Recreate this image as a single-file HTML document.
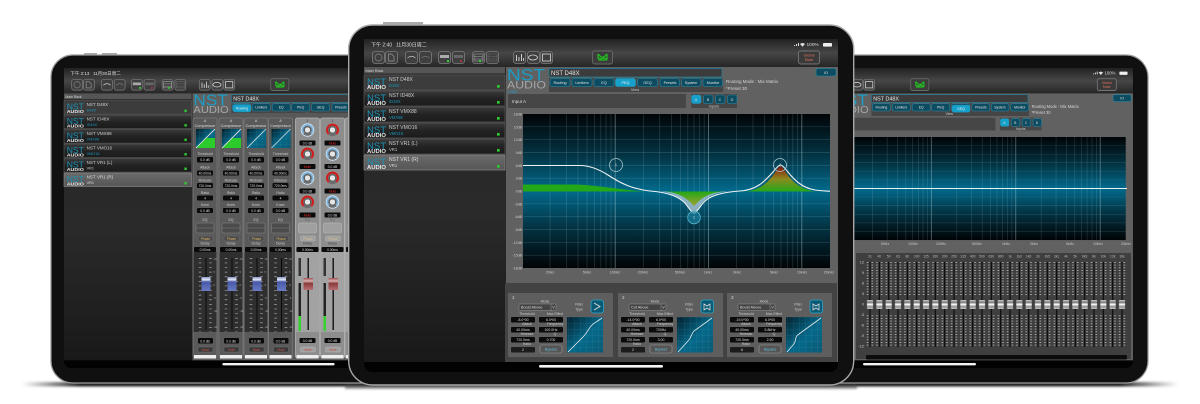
<!DOCTYPE html>
<html><head><meta charset="utf-8"><style>
html,body{margin:0;padding:0;background:#fff;width:1200px;height:404px;overflow:hidden}
svg{display:block}
text{font-family:"Liberation Sans","Noto Sans CJK SC",sans-serif}
</style></head><body>
<svg xmlns="http://www.w3.org/2000/svg" width="1200" height="404" viewBox="0 0 1200 404">
<defs>
<linearGradient id="tb" x1="0" y1="0" x2="0" y2="1"><stop offset="0" stop-color="#222"/><stop offset=".5" stop-color="#464646"/><stop offset="1" stop-color="#262626"/></linearGradient>
<linearGradient id="li" x1="0" y1="0" x2="0" y2="1"><stop offset="0" stop-color="#3a3a3a"/><stop offset=".5" stop-color="#232323"/><stop offset="1" stop-color="#1b1b1b"/></linearGradient>
<linearGradient id="lsel" x1="0" y1="0" x2="0" y2="1"><stop offset="0" stop-color="#6a6a6a"/><stop offset="1" stop-color="#565656"/></linearGradient>
<linearGradient id="lb" x1="0" y1="0" x2="0" y2="1"><stop offset="0" stop-color="#262626"/><stop offset=".5" stop-color="#2a2a2a"/><stop offset="1" stop-color="#191919"/></linearGradient>
<linearGradient id="plot" x1="0" y1="0" x2="0" y2="1"><stop offset="0" stop-color="#010406"/><stop offset=".25" stop-color="#03303f"/><stop offset=".5" stop-color="#026a8c"/><stop offset=".75" stop-color="#03303f"/><stop offset="1" stop-color="#010406"/></linearGradient>
<linearGradient id="mini" x1="0" y1="0" x2="1" y2="1"><stop offset="0" stop-color="#04202c"/><stop offset=".55" stop-color="#05698a"/><stop offset="1" stop-color="#0a5a74"/></linearGradient>
<linearGradient id="pk" x1="0" y1="0" x2="0" y2="1"><stop offset="0" stop-color="#8e1408"/><stop offset=".5" stop-color="#8c8a20"/><stop offset="1" stop-color="#22a818"/></linearGradient>
<linearGradient id="dp" x1="0" y1="1" x2="0" y2="0"><stop offset="0" stop-color="#a0a030"/><stop offset="1" stop-color="#22a818"/></linearGradient>
<linearGradient id="cap" x1="0" y1="0" x2="0" y2="1"><stop offset="0" stop-color="#8d9ad0"/><stop offset=".2" stop-color="#e4e6f2"/><stop offset=".35" stop-color="#4658a8"/><stop offset="1" stop-color="#6a7ac4"/></linearGradient>
<linearGradient id="capr" x1="0" y1="0" x2="0" y2="1"><stop offset="0" stop-color="#a05050"/><stop offset=".25" stop-color="#d8b0b0"/><stop offset=".45" stop-color="#8a3a3a"/><stop offset="1" stop-color="#b87070"/></linearGradient>
<linearGradient id="shd" x1="0" y1="0" x2="1" y2="0"><stop offset="0" stop-color="#444" stop-opacity="0"/><stop offset=".05" stop-color="#222"/><stop offset=".95" stop-color="#222"/><stop offset="1" stop-color="#444" stop-opacity="0"/></linearGradient>
<filter id="bl" x="-5%" y="-200%" width="110%" height="500%"><feGaussianBlur stdDeviation="1.1"/></filter>
<pattern id="cgrid" width="6" height="6" patternUnits="userSpaceOnUse"><path d="M0 0H6M0 0V6" stroke="#8fc4d6" stroke-opacity=".35" stroke-width=".4" fill="none"/></pattern>
<pattern id="gdots" x="865.330" y="262" width="9.333" height="2.667" patternUnits="userSpaceOnUse"><rect x="1.500" y="0" width="1.600" height=".9" fill="#cfcfcf" fill-opacity=".8"/><rect x="6.200" y="0" width="1.600" height=".9" fill="#cfcfcf" fill-opacity=".8"/></pattern>
<pattern id="gcap" x="865.330" y="300" width="9.333" height="9" patternUnits="userSpaceOnUse"><rect x="1.700" y="0" width="6" height="9" fill="#b9b9b9"/><rect x="1.700" y="1.500" width="6" height="1.300" fill="#777"/><rect x="1.700" y="3.800" width="6" height="1.400" fill="#f4f4f4"/><rect x="1.700" y="6.400" width="6" height="1.100" fill="#888"/></pattern>

<g id="btn"><rect x=".5" y=".5" width="12" height="12" rx="2.500" fill="#3f3f3f" stroke="#7d7d7d" stroke-width=".8"/></g>

<g id="item">
<text x="3" y="10" font-size="9.500" fill="#1b93b8" textLength="19" lengthAdjust="spacingAndGlyphs">NST</text>
<text x="3" y="14" font-size="5.500" font-weight="bold" fill="#e8e8e8" textLength="19" lengthAdjust="spacingAndGlyphs">AUDIO</text>
</g>

<g id="ticks"><path d="M-5.500 0V74M5 0V74" stroke="#a8a8a8" stroke-width="2.600" stroke-dasharray=".7 3.900" fill="none"/><g font-size="2.600" fill="#aaa"><text x="8" y="2">10</text><text x="8" y="15">5</text><text x="8" y="28">0</text><text x="8" y="41">-5</text><text x="8" y="54">-10</text><text x="8" y="70">-20</text></g></g>

<g id="shell">
<rect x="364" y="39" width="474" height="28" fill="url(#tb)"/>
<use href="#btn" x="372" y="51"/><use href="#btn" x="385" y="51"/>
<circle cx="378.500" cy="57.500" r="3.500" fill="none" stroke="#777" stroke-width=".9"/>
<path d="M388.500 54h3l2.500 2.500v4.500h-5.500z" fill="none" stroke="#999" stroke-width=".7"/>
<use href="#btn" x="405" y="51"/><use href="#btn" x="419" y="51"/>
<path d="M407.500 58q4-3.500 8 0" stroke="#ccc" stroke-width=".8" fill="none"/><path d="M421.500 58q4-3.500 8 0" stroke="#777" stroke-width=".8" fill="none"/>
<use href="#btn" x="438" y="51"/><use href="#btn" x="452" y="51"/>
<rect x="440" y="55" width="9" height="3" fill="#aaa"/><rect x="454" y="55" width="9" height="3" fill="#666"/><rect x="447" y="60" width="2" height="2" fill="#2fd02f"/><rect x="460" y="60" width="2" height="2" fill="#a33"/>
<use href="#btn" x="472" y="51"/><use href="#btn" x="486" y="51"/>
<path d="M474 54h9v7h-9zM474 56.500h9M474 59h9" stroke="#aaa" stroke-width=".6" fill="none"/><path d="M488 54h9v7h-9zM488 56.500h9M488 59h9" stroke="#666" stroke-width=".6" fill="none"/><rect x="479" y="60" width="2" height="2" fill="#2fd02f"/>
<use href="#btn" x="513" y="51"/><use href="#btn" x="527" y="51"/><use href="#btn" x="540" y="51"/>
<path d="M516 61V55h.9v6zM518.500 61v-4h.9v4zM521 61V54h.9v7zM523 61v-3h.8v3z" fill="#ddd"/>
<ellipse cx="533" cy="57.500" rx="4.500" ry="2.500" fill="none" stroke="#ddd" stroke-width=".8"/>
<rect x="542.500" y="54" width="8" height="7" fill="none" stroke="#ddd" stroke-width=".8"/>
<rect x="592.500" y="51" width="20" height="13" rx="2" fill="#3c3c3c" stroke="#777" stroke-width=".7"/>
<path d="M598 54v4l3 1 3-1 3 1v-5M598 54l3 3 3 0 3-3M598 60h9" stroke="#23b823" stroke-width="1.300" fill="none"/>
<rect x="798.500" y="51" width="21" height="13" rx="2" fill="#3a3a3a" stroke="#888" stroke-width=".7"/>
<text x="809" y="56.500" font-size="3.800" fill="#e0705a" text-anchor="middle">Global</text><text x="809" y="61" font-size="3.800" fill="#e0705a" text-anchor="middle">Mute</text>
<path d="M794 46v-1h1v1zM796 46v-2h1v2zM798 46v-3h1v3z" fill="#ddd"/>
<path d="M800 44q2.500-2 5 0l-2.500 2.700z" fill="#ddd"/>
<text x="806.500" y="46" font-size="4.800" fill="#ddd">100%</text>
<rect x="823" y="43" width="9" height="3.600" rx=".8" fill="#eee"/>
<!-- list -->
<rect x="364" y="67" width="142" height="295" fill="url(#lb)"/>
<rect x="364" y="67" width="141" height="6.500" fill="#555"/><text x="365.500" y="72" font-size="3.800" fill="#ddd">Main Rack</text>
<g><rect x="364" y="75" width="141" height="15" fill="#3c3c3c" stroke="#5a5a5a" stroke-width=".7"/><use href="#item" x="364" y="75"/><text x="389" y="81" font-size="5" fill="#ccc">NST D48X</text><text x="389" y="87" font-size="4.200" fill="#1b93b8">D48X</text><rect x="497" y="85" width="2.700" height="2.700" fill="#2fc62f"/></g>
<g><rect x="364" y="91" width="141" height="15" fill="url(#li)" stroke="#5a5a5a" stroke-width=".7"/><use href="#item" x="364" y="91"/><text x="389" y="97" font-size="5" fill="#ccc">NST ID48X</text><text x="389" y="103" font-size="4.200" fill="#1b93b8">ID48X</text><rect x="497" y="101" width="2.700" height="2.700" fill="#2fc62f"/></g>
<g><rect x="364" y="107" width="141" height="15" fill="url(#li)" stroke="#5a5a5a" stroke-width=".7"/><use href="#item" x="364" y="107"/><text x="389" y="113" font-size="5" fill="#ccc">NST VMX88</text><text x="389" y="119" font-size="4.200" fill="#1b93b8">VMX88</text><rect x="497" y="117" width="2.700" height="2.700" fill="#2fc62f"/></g>
<g><rect x="364" y="123" width="141" height="15" fill="url(#li)" stroke="#5a5a5a" stroke-width=".7"/><use href="#item" x="364" y="123"/><text x="389" y="129" font-size="5" fill="#ccc">NST VMO16</text><text x="389" y="135" font-size="4.200" fill="#1b93b8">VMO16</text><rect x="497" y="133" width="2.700" height="2.700" fill="#2fc62f"/></g>
<g><rect x="364" y="139" width="141" height="15" fill="url(#li)" stroke="#5a5a5a" stroke-width=".7"/><use href="#item" x="364" y="139"/><text x="389" y="145" font-size="5" fill="#ccc">NST VR1 (L)</text><text x="389" y="151" font-size="4.200" fill="#ccc">VR1</text><rect x="497" y="149" width="2.700" height="2.700" fill="#2fc62f"/></g>
<g><rect x="364" y="155" width="141" height="15" fill="url(#lsel)" stroke="#888" stroke-width=".7"/><use href="#item" x="364" y="155"/><text x="389" y="161" font-size="5" fill="#ddd">NST VR1 (R)</text><text x="389" y="167" font-size="4.200" fill="#ddd">VR1</text><rect x="497" y="165" width="2.700" height="2.700" fill="#2fc62f"/></g>
<!-- panel -->
<rect x="506" y="67" width="332" height="295" fill="#616161"/>
<text x="507" y="80.500" font-size="17" fill="#1a9cc4" textLength="38" lengthAdjust="spacingAndGlyphs">NST</text>
<text x="507" y="88.500" font-size="11" fill="#a5a5a5" textLength="39" lengthAdjust="spacingAndGlyphs">AUDIO</text>
<text x="508" y="93" font-size="3.800" fill="#1a9cc4">D48X</text>
<rect x="549" y="68.500" width="173" height="8.500" rx="1" fill="#3c3c3c" stroke="#1b7f9c" stroke-width=".7"/>
<text x="551" y="75" font-size="6" fill="#e6e6e6">NST D48X</text>
<rect x="549" y="78" width="174" height="14" fill="#454545"/>
<g font-size="3.800" fill="#e4e4e4" text-anchor="middle">
<g fill="#0d4b60" stroke="#2b8ba8" stroke-width=".6"><rect x="550" y="78.500" width="20" height="8" rx="2"/><rect x="572" y="78.500" width="20" height="8" rx="2"/><rect x="594" y="78.500" width="20" height="8" rx="2"/><rect x="615.500" y="78.500" width="20" height="8" rx="2"/><rect x="637.500" y="78.500" width="20" height="8" rx="2"/><rect x="660" y="78.500" width="19.500" height="8" rx="2"/><rect x="681.500" y="78.500" width="19.500" height="8" rx="2"/><rect x="703" y="78.500" width="19.500" height="8" rx="2"/></g>
<text x="560" y="84">Routing</text><text x="582" y="84">Limiters</text><text x="604" y="84">EQ</text><text x="625.500" y="84">PEQ</text><text x="647.500" y="84">GEQ</text><text x="670" y="84">Presets</text><text x="691" y="84">System</text><text x="713" y="84">Monitor</text>
<text x="635" y="91" fill="#ccc">View</text>
</g>
</g>

<g id="hdr">
<text x="726" y="83" font-size="4.500" fill="#d5d5d5">Routing Mode : Mix Matrix</text>
<text x="726" y="90" font-size="4.500" fill="#d5d5d5">*Preset 30</text>
<rect x="816" y="68.500" width="20" height="7.500" rx="2" fill="#0d4b60" stroke="#2b8ba8" stroke-width=".6"/><text x="826" y="74" font-size="4" fill="#ddd" text-anchor="middle">IO</text>
<rect x="508" y="94" width="178" height="14" rx="1" fill="#464646"/>
<text x="512" y="103" font-size="4.500" fill="#ddd">Input A</text>
<rect x="691" y="94" width="46" height="14" rx="1" fill="#464646"/>
<g font-size="3.800" text-anchor="middle" fill="#ddd">
<g fill="#0d4b60" stroke="#2b8ba8" stroke-width=".6"><rect x="691.500" y="95" width="9.500" height="8.500" rx="2" fill="#16a0cc"/><rect x="703.500" y="95" width="9.500" height="8.500" rx="2"/><rect x="715.500" y="95" width="9.500" height="8.500" rx="2"/><rect x="727.500" y="95" width="9.500" height="8.500" rx="2"/></g>
<text x="696" y="101">A</text><text x="708" y="101">B</text><text x="720" y="101">C</text><text x="732" y="101">D</text>
<text x="714" y="107.300" fill="#ccc">Inputs</text>
</g>
</g>

<g id="plotg">
<rect x="523" y="114" width="307" height="154" fill="url(#plot)"/>
<path d="M523 126.800H830M523 139.700H830M523 152.500H830M523 165.300H830M523 178.200H830M523 203.800H830M523 216.700H830M523 229.500H830M523 242.300H830M523 255.200H830" stroke="#9fd0e0" stroke-opacity=".22" stroke-width=".7"/>
<path d="M550 114V268M566.400 114V268M578 114V268M587 114V268M594.500 114V268M600.800 114V268M606 114V268M611 114V268M643.300 114V268M659.700 114V268M671.400 114V268M680.400 114V268M687.800 114V268M694 114V268M699.500 114V268M704.200 114V268M736.600 114V268M753 114V268M764.700 114V268M773.700 114V268M781 114V268M787.300 114V268M792.800 114V268M797.500 114V268" stroke="#b8dde8" stroke-opacity=".2" stroke-width=".7"/>
<path d="M615.200 114V268M708.500 114V268M801.800 114V268" stroke="#c8e4ec" stroke-opacity=".42" stroke-width=".9"/>
</g>

<g id="ch">
<rect x="0" y="118" width="24" height="240" rx="2" fill="#5a5a5a" stroke="#7a7a7a" stroke-width=".8"/>
<rect x=".5" y="252" width="23" height="80" fill="#2f2f2f"/>
<text x="12" y="122" font-size="3.500" fill="#ddd" text-anchor="middle">A</text>
<text x="12" y="127" font-size="3.800" fill="#ddd" text-anchor="middle">Compressor</text>
<rect x="3" y="129" width="19" height="19" fill="url(#mini)"/><rect x="3" y="129" width="19" height="19" fill="url(#cgrid)"/>
<path d="M3 148L22 129" stroke="#ddd" stroke-width=".8"/>
<g font-size="3.500" fill="#ccc" text-anchor="middle"><text x="12" y="155">Threshold</text><text x="12" y="168.500">Attack</text><text x="12" y="181.500">Release</text><text x="12" y="194">Ratio</text><text x="12" y="206">Knee</text><text x="12" y="221">EQ</text><text x="12" y="244.500">Delay</text></g>
<g fill="#0b0b0b"><rect x="4" y="157" width="16" height="5.500" rx="1"/><rect x="4" y="170.500" width="16" height="5" rx="1"/><rect x="4" y="183" width="16" height="5" rx="1"/><rect x="4" y="195.500" width="16" height="5" rx="1"/><rect x="4" y="208" width="16" height="5" rx="1"/><rect x="1" y="247" width="22" height="5" rx="1"/><rect x="5" y="338" width="15" height="5.500" rx="1"/></g>
<g font-size="3.300" fill="#ddd" text-anchor="middle"><text x="12" y="161.200">0.0 dB</text><text x="12" y="174.500">40.00ms</text><text x="12" y="187">720.0ms</text><text x="12" y="199.500">4</text><text x="12" y="212">0.0 dB</text><text x="12" y="251">0.00ms</text><text x="12" y="342.300">0.0 dB</text></g>
<rect x="3" y="223" width="18" height="10" rx="1.500" fill="#4b4b4b" stroke="#888" stroke-width=".5"/><path d="M3 228H21" stroke="#888" stroke-width=".4"/>
<rect x="5" y="236" width="15" height="5" rx="1" fill="#4b4b4b" stroke="#777" stroke-width=".4"/><text x="12.500" y="240" font-size="3.300" fill="#d9b060" text-anchor="middle">Phase</text>
<rect x="12.500" y="258" width="1" height="72" fill="#080808"/>
<use href="#ticks" x="12.500" y="258"/>
<rect x="8.500" y="277" width="9" height="14" rx=".5" fill="url(#cap)"/>
<rect x="5" y="347" width="15" height="5" rx="1" fill="#3a3a3a" stroke="#777" stroke-width=".4"/><text x="12.500" y="351" font-size="3.300" fill="#c05040" text-anchor="middle">Mute</text>
<rect x="1" y="355" width="22" height="3.500" fill="#eee"/>
</g>

<g id="kb"><circle r="6.300" fill="#6c6c6c" stroke="#cfe4f4" stroke-width="1"/><path d="M-3.500 3.500A5 5 0 1 1 3.500 3.500" fill="none" stroke="#79b8e8" stroke-width="1.400"/><circle r="3" fill="#e6e6e6" stroke="#333" stroke-width=".5"/></g>
<g id="kr"><circle r="6.300" fill="#6c6c6c" stroke="#888" stroke-width=".6"/><path d="M-3.900 3.900A5.500 5.500 0 1 1 3.900 3.900" fill="none" stroke="#d81818" stroke-width="1.900"/><circle r="3" fill="#e6e6e6" stroke="#333" stroke-width=".5"/></g>
<g id="vb"><rect x="4" y="0" width="16" height="5" rx="1" fill="#0b0b0b"/><text x="12" y="3.800" font-size="3.300" fill="#ddd" text-anchor="middle">0.0 dB</text></g>
<g id="mb"><rect x="4" y="0" width="16" height="5" rx="1" fill="#0b0b0b"/><text x="12" y="3.800" font-size="3.300" fill="#e02020" text-anchor="middle">Mute</text></g>

<g id="och">
<rect x="0" y="118" width="24" height="240" rx="2" fill="#8d8d8d" stroke="#b4b4b4" stroke-width=".8"/>
<rect x=".5" y="252" width="23" height="80" fill="#a2a2a2"/>
<text x="12" y="122" font-size="3.500" fill="#333" text-anchor="middle">1</text>
<text x="12" y="221" font-size="3.500" fill="#666" text-anchor="middle">EQ</text>
<rect x="3" y="223" width="18" height="10" rx="1.500" fill="#a0a0a0" stroke="#bbb" stroke-width=".5"/>
<rect x="5" y="236" width="15" height="5" rx="1" fill="#a0a0a0" stroke="#bbb" stroke-width=".4"/><text x="12.500" y="240" font-size="3.300" fill="#d8c090" text-anchor="middle">Phase</text>
<text x="12" y="244.500" font-size="3.500" fill="#444" text-anchor="middle">Delay</text>
<rect x="1" y="247" width="22" height="5" rx="1" fill="#0b0b0b"/><text x="12" y="251" font-size="3.300" fill="#ddd" text-anchor="middle">0.00ms</text>
<rect x="3" y="258" width="2.500" height="18" fill="#333"/><rect x="3" y="283" width="2.500" height="48" fill="#222"/><rect x="3" y="316" width="2.500" height="15" fill="#35d12f"/>
<rect x="12" y="258" width="1.400" height="72" fill="#111"/>
<use href="#ticks" x="12.500" y="258" opacity=".7"/>
<rect x="8" y="278" width="9.500" height="12" rx=".5" fill="url(#capr)"/>
<use href="#vb" x="0" y="338"/>
<rect x="5" y="347" width="15" height="5" rx="1" fill="#a0a0a0" stroke="#bbb" stroke-width=".4"/><text x="12.500" y="351" font-size="3.300" fill="#c05040" text-anchor="middle">Mute</text>
<rect x="1" y="355" width="22" height="3.500" fill="#eee"/>
</g>

<g id="card">
<rect x="0" y="0" width="105" height="64" fill="#5e5e5e"/>
<g font-size="3.500" fill="#ccc" text-anchor="middle">
<text x="37" y="9.500">Mode</text><text x="19" y="21.800">Threshold</text><text x="47" y="21.800">Max Effect</text><text x="19" y="31.800">Attack</text><text x="47" y="31.800">Frequency</text><text x="19" y="41.800">Release</text><text x="47" y="41.800">Q</text><text x="19" y="51.800">Ratio</text>
<text x="71" y="12.500">Filter</text><text x="71" y="17.500">Type</text>
</g>
<rect x="11" y="11" width="37" height="6.500" rx=".8" fill="#444" stroke="#aaa" stroke-width=".4"/><path d="M43 11V17.500" stroke="#aaa" stroke-width=".4"/>
<g fill="#0b0b0b"><rect x="3" y="24" width="24" height="5.500" rx="1"/><rect x="31" y="24" width="24" height="5.500" rx="1"/><rect x="3" y="34" width="24" height="5.500" rx="1"/><rect x="31" y="34" width="24" height="5.500" rx="1"/><rect x="3" y="44" width="24" height="5.500" rx="1"/><rect x="31" y="44" width="24" height="5.500" rx="1"/><rect x="3" y="54" width="24" height="5.500" rx="1" fill="#1c1c1c"/></g>
<rect x="32" y="52" width="22" height="8" rx="2" fill="#555" stroke="#999" stroke-width=".6"/><text x="43" y="57.300" font-size="3.800" fill="#5fc3e0" text-anchor="middle">Bypass</text>
<rect x="83" y="7" width="12.500" height="13" rx="2.500" fill="#0b5a75" stroke="#2ea5c6" stroke-width=".8"/>
<rect x="59" y="24" width="36" height="35.500" fill="url(#mini)"/><rect x="59" y="24" width="36" height="35.500" fill="url(#cgrid)"/>
</g>
</defs>

<rect width="1200" height="404" fill="#fff"/>
<!-- shadow -->
<rect x="22" y="382" width="1156" height="4.500" fill="url(#shd)" filter="url(#bl)"/>
<rect x="345" y="384" width="512" height="5" fill="#444" opacity=".55" filter="url(#bl)"/>

<!-- LEFT iPad -->
<rect x="84" y="53" width="13" height="3" fill="#aaa"/><rect x="102" y="53" width="15" height="3" fill="#aaa"/>
<rect x="51" y="55" width="500" height="328" rx="22" fill="#101010" stroke="#9a9a9a" stroke-width="1.200"/>
<rect x="64" y="68" width="429" height="300" rx="7" fill="#020202"/>
<g transform="translate(64,68) scale(.905) translate(-364,-39)"><use href="#shell"/>
<text x="371" y="46.500" font-size="5" fill="#ddd">下午 2:13</text><text x="396" y="46.500" font-size="5" fill="#ddd">11月30日周二</text></g>
<rect x="233" y="104.500" width="18" height="7.500" rx="2" fill="#16a0cc" stroke="#2b8ba8" stroke-width=".5"/><text x="242" y="109.700" font-size="3.500" fill="#eee" text-anchor="middle">Routing</text>
<rect x="192.500" y="113" width="156" height="246" fill="#585858"/>
<use href="#ch" x="193"/><use href="#ch" x="219"/><use href="#ch" x="244"/><use href="#ch" x="268.500"/>
<!-- active compressor areas -->
<path d="M196 148v-6l2 0 7-7v6h10v7z" fill="#2fd02f" opacity="0"/>
<path d="M196 148L206 138H215V148Z" fill="#2ccb2c"/><path d="M196 148L215 129" stroke="#ddd" stroke-width=".8"/>
<path d="M222 148L232 138H241V148Z" fill="#2ccb2c"/><path d="M222 148L241 129" stroke="#ddd" stroke-width=".8"/>
<use href="#och" x="295.500"/><use href="#och" x="320.500"/><use href="#och" x="345"/>
<use href="#kb" x="307.500" y="130"/>
<use href="#kr" x="307.500" y="154"/><use href="#kb" x="307.500" y="178"/><use href="#kr" x="307.500" y="202"/>
<use href="#kr" x="332.500" y="130"/><use href="#kb" x="332.500" y="154"/><use href="#kr" x="332.500" y="178"/><use href="#kb" x="332.500" y="202"/>
<g transform="translate(295.500,140.500)"><use href="#vb"/></g><g transform="translate(295.500,164)"><use href="#mb"/></g><g transform="translate(295.500,188.500)"><use href="#vb"/></g><g transform="translate(295.500,212.500)"><use href="#mb"/></g>
<g transform="translate(320.500,140.500)"><use href="#mb"/></g><g transform="translate(320.500,164)"><use href="#vb"/></g><g transform="translate(320.500,188.500)"><use href="#mb"/></g><g transform="translate(320.500,212.500)"><use href="#vb"/></g>
<g transform="translate(64,68) scale(.905) translate(-364,-39)"><rect x="539" y="365" width="124" height="2.600" rx="1.300" fill="#f4f4f4"/></g>

<!-- RIGHT iPad -->
<rect x="650" y="55" width="498" height="328" rx="22" fill="#101010" stroke="#9a9a9a" stroke-width="1.200"/>
<rect x="704" y="68" width="429" height="300" rx="7" fill="#020202"/>
<g transform="translate(704,68) scale(.905) translate(-364,-39)"><use href="#shell"/><use href="#hdr"/></g>
<rect x="952" y="105" width="18" height="7.300" rx="2" fill="#16a0cc" stroke="#2b8ba8" stroke-width=".5"/><text x="961" y="110" font-size="3.500" fill="#eee" text-anchor="middle">GEQ</text>
<g transform="translate(704,137) scale(.905,.669) translate(-364,-114)"><use href="#plotg"/></g>
<path d="M847 188.500H1127" stroke="#e8f2f5" stroke-width="1"/>
<g font-size="3.500" fill="#ccc" text-anchor="middle"><text x="885" y="245">50Hz</text><text x="913" y="245">100Hz</text><text x="941" y="245">200Hz</text><text x="977" y="245">500Hz</text><text x="1006" y="245">1kHz</text><text x="1034" y="245">2kHz</text><text x="1070" y="245">5kHz</text><text x="1098" y="245">10kHz</text><text x="1126" y="245">20kHz</text></g>
<rect x="856" y="253" width="275" height="106" rx="1" fill="#3f3f3f"/>
<rect x="865.330" y="262" width="261.300" height="34" fill="url(#gdots)"/>
<rect x="865.330" y="314" width="261.300" height="33" fill="url(#gdots)"/>
<path d="M870 262V347M879.330 262V347M888.660 262V347M898 262V347M907.330 262V347M916.660 262V347M926 262V347M935.330 262V347M944.660 262V347M954 262V347M963.330 262V347M972.660 262V347M982 262V347M991.330 262V347M1000.660 262V347M1010 262V347M1019.330 262V347M1028.660 262V347M1038 262V347M1047.330 262V347M1056.660 262V347M1066 262V347M1075.330 262V347M1084.660 262V347M1094 262V347M1103.330 262V347M1112.660 262V347M1122 262V347" stroke="#0a0a0a" stroke-width="1.100"/>
<rect x="865.330" y="300" width="261.300" height="9" fill="url(#gcap)"/>
<rect x="866" y="355" width="261" height="4.500" rx="1" fill="#0c0c0c"/>
<g font-size="3.300" fill="#bbb" text-anchor="middle"><text x="870" y="257.500">31</text><text x="879.300" y="257.500">40</text><text x="888.700" y="257.500">50</text><text x="898" y="257.500">63</text><text x="907.300" y="257.500">80</text><text x="916.700" y="257.500">100</text><text x="926" y="257.500">125</text><text x="935.300" y="257.500">160</text><text x="944.700" y="257.500">200</text><text x="954" y="257.500">250</text><text x="963.300" y="257.500">315</text><text x="972.700" y="257.500">400</text><text x="982" y="257.500">500</text><text x="991.300" y="257.500">630</text><text x="1000.700" y="257.500">800</text><text x="1010" y="257.500">1k</text><text x="1019.300" y="257.500">1k2</text><text x="1028.700" y="257.500">1k6</text><text x="1038" y="257.500">2k</text><text x="1047.300" y="257.500">2k5</text><text x="1056.700" y="257.500">3k1</text><text x="1066" y="257.500">4k</text><text x="1075.300" y="257.500">5k</text><text x="1084.700" y="257.500">6k3</text><text x="1094" y="257.500">8k</text><text x="1103.300" y="257.500">10k</text><text x="1112.700" y="257.500">12k</text><text x="1122" y="257.500">16k</text></g>
<g font-size="3.800" fill="#ccc" text-anchor="end"><text x="864" y="263.500">12</text><text x="864" y="274">9</text><text x="864" y="284.500">6</text><text x="864" y="295">3</text><text x="864" y="305.500">0</text><text x="864" y="316">-3</text><text x="864" y="326.500">-6</text><text x="864" y="337">-9</text><text x="864" y="347.500">-12</text></g>
<rect x="863" y="363" width="113" height="2.400" rx="1.200" fill="#f4f4f4"/>

<!-- CENTER iPad -->
<rect x="383" y="22" width="40" height="3" fill="#aaa"/>
<rect x="348.700" y="25" width="505" height="360" rx="24" fill="#101010" stroke="#a8a8a8" stroke-width="1.400"/>
<rect x="364" y="39" width="474" height="333" rx="8" fill="#020202"/>
<use href="#shell"/><use href="#hdr"/>
<text x="371" y="46.500" font-size="5" fill="#ddd">下午 2:40</text><text x="396" y="46.500" font-size="5" fill="#ddd">11月30日周二</text>
<rect x="615.500" y="78.500" width="20" height="8" rx="2" fill="#16a0cc" stroke="#2b8ba8" stroke-width=".6"/><text x="625.500" y="84" font-size="3.800" fill="#eee" text-anchor="middle">PEQ</text>
<use href="#plotg"/>
<g font-size="3.600" fill="#ccc" text-anchor="end"><text x="522" y="115.500">18dB</text><text x="522" y="128.300">15dB</text><text x="522" y="141.200">12dB</text><text x="522" y="154">9dB</text><text x="522" y="166.800">6dB</text><text x="522" y="179.700">3dB</text><text x="522" y="192.500">0dB</text><text x="522" y="205.300">-3dB</text><text x="522" y="218.200">-6dB</text><text x="522" y="231">-9dB</text><text x="522" y="243.800">-12dB</text><text x="522" y="256.700">-15dB</text><text x="522" y="269.500">-18dB</text></g>
<g font-size="3.600" fill="#ccc" text-anchor="middle"><text x="550" y="273.500">20Hz</text><text x="587" y="273.500">50Hz</text><text x="615" y="273.500">100Hz</text><text x="643" y="273.500">200Hz</text><text x="680" y="273.500">500Hz</text><text x="708" y="273.500">1kHz</text><text x="737" y="273.500">2kHz</text><text x="774" y="273.500">5kHz</text><text x="802" y="273.500">10kHz</text><text x="829" y="273.500">20kHz</text></g>
<!-- EQ curve -->
<path d="M660 191.500C675 193 684 200 688 206L694 214L700 206C704 199 712 193 728 191.500Z" fill="#b8cfdc" opacity=".75"/>
<path d="M523 184.500L575 184.500C595 185 615 189 645 191.500H523Z" fill="#22a818"/>
<path d="M665 191.500C678 192.500 686 198 690 202L694 206L698 202C702 198 710 192.500 723 191.500Z" fill="url(#dp)"/>
<path d="M745 191.500C762 190 770 180 775 172.500C778 168 779.500 166.500 780.500 166.500C781.500 166.500 783 168 786 172.500C791 180 799 189 815 191.500Z" fill="url(#pk)"/>
<path d="M523 165.500H580C590 165.500 600 170 608 175C620 183 632 189 650 191C668 192.500 678 196 685 203C689 208 692 213 694 213.500C696 213 699 208 703 203C709 196 720 192.500 740 191C757 190 765 181 773 172C777 167 779 165 780.500 165C782 165 784 167 788 172C795 181 803 188 815 190C822 191 826 191 830 191.300" fill="none" stroke="#eef2f2" stroke-width="1.100"/>
<circle cx="616" cy="165" r="6.500" fill="none" stroke="#a8c4cc" stroke-width=".8"/><path d="M616 163.500v3" stroke="#ccc" stroke-width=".5"/>
<circle cx="694" cy="217.500" r="6.300" fill="#1a7f9c" fill-opacity=".7" stroke="#5ab4cc" stroke-width=".8"/><path d="M694 216v3" stroke="#ddd" stroke-width=".5"/>
<circle cx="780" cy="165" r="6.500" fill="none" stroke="#a8c4cc" stroke-width=".8"/><path d="M780 163.500v3" stroke="#ddd" stroke-width=".5"/>
<!-- bottom panel -->
<rect x="505" y="283" width="332" height="79" rx="1" fill="#434343"/>
<g transform="translate(508,293)"><use href="#card"/>
<text x="4" y="6" font-size="4.500" fill="#ddd">1</text><text x="13" y="15.700" font-size="3.800" fill="#ddd">Boost Above</text><text x="45.500" y="15.700" font-size="3.800" fill="#ddd" text-anchor="middle">V</text>
<g font-size="3.500" fill="#ddd" text-anchor="middle"><text x="15" y="28">-8.0*00</text><text x="43" y="28">6.0*00</text><text x="15" y="38">40.00ms</text><text x="43" y="38">100.0Hz</text><text x="15" y="48">720.0ms</text><text x="43" y="48">0.700</text><text x="15" y="58">2</text></g>
<path d="M86 10l6 3.500-6 3.500" stroke="#ddd" stroke-width=".9" fill="none"/>
<path d="M60 59L75 44C80 39 80 36 84 32C86 30 90 28 94 25" fill="none" stroke="#e8eeee" stroke-width=".8"/></g>
<g transform="translate(618,293)"><use href="#card"/>
<text x="4" y="6" font-size="4.500" fill="#ddd">2</text><text x="13" y="15.700" font-size="3.800" fill="#ddd">Cut Above</text><text x="45.500" y="15.700" font-size="3.800" fill="#ddd" text-anchor="middle">V</text>
<g font-size="3.500" fill="#ddd" text-anchor="middle"><text x="15" y="28">-14.0*00</text><text x="43" y="28">6.0*00</text><text x="15" y="38">40.00ms</text><text x="43" y="38">700Hz</text><text x="15" y="48">720.0ms</text><text x="43" y="48">3.00</text><text x="15" y="58">2</text></g>
<path d="M86 11l3 2 3-2v6l-3-2-3 2z" stroke="#ddd" stroke-width=".8" fill="none"/>
<path d="M60 59L70 48C74 44 73 41 76 38L94 25" fill="none" stroke="#e8eeee" stroke-width=".8"/></g>
<g transform="translate(727,293)"><use href="#card"/>
<text x="4" y="6" font-size="4.500" fill="#ddd">3</text><text x="13" y="15.700" font-size="3.800" fill="#ddd">Boost Above</text><text x="45.500" y="15.700" font-size="3.800" fill="#ddd" text-anchor="middle">V</text>
<g font-size="3.500" fill="#ddd" text-anchor="middle"><text x="15" y="28">-19.0*00</text><text x="43" y="28">6.0*00</text><text x="15" y="38">40.00ms</text><text x="43" y="38">5.8kHz</text><text x="15" y="48">720.0ms</text><text x="43" y="48">2.90</text><text x="15" y="58">6</text></g>
<path d="M86 11l3 2 3-2v6l-3-2-3 2z" stroke="#ddd" stroke-width=".8" fill="none"/>
<path d="M60 59L66 52C70 48 67 44 72 41L94 25" fill="none" stroke="#e8eeee" stroke-width=".8"/></g>
<rect x="539" y="365" width="124" height="2.600" rx="1.300" fill="#f6f6f6"/>
</svg>
</body></html>
